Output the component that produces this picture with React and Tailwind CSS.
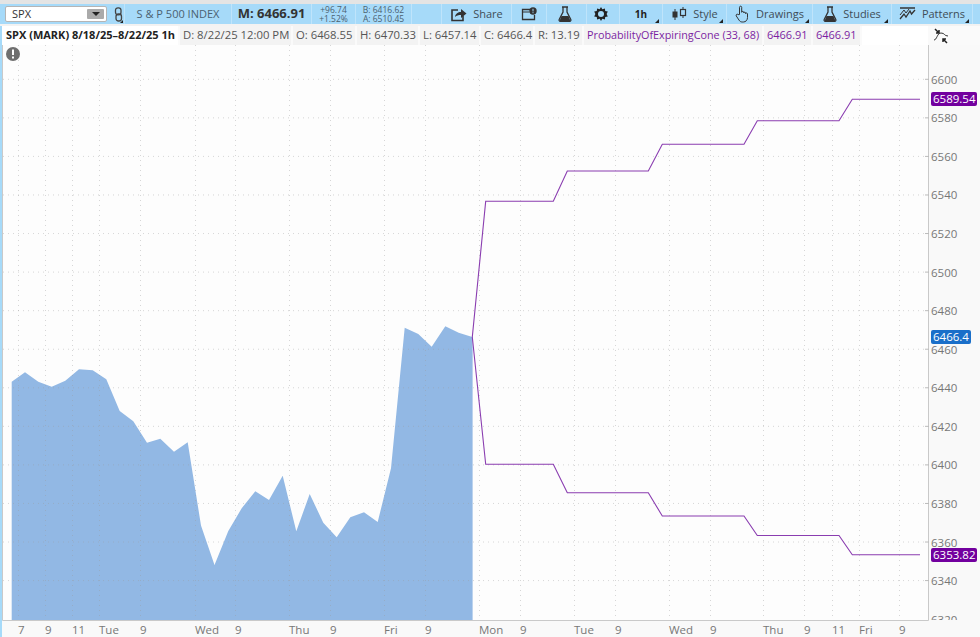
const font = { fontFamily: '"Open Sans", "Noto Sans", sans-serif' };

const levels = [6600, 6580, 6560, 6540, 6520, 6500, 6480, 6460, 6440, 6420, 6400, 6380, 6360, 6340, 6320];
const priceY = (v) => 79.3 + (6600 - v) * 1.928;

const timeTicks = [
  [18, '7'], [45, '9'], [72, '11'], [99, 'Tue'], [140, '9'], [195, 'Wed'], [235, '9'], [289, 'Thu'], [330, '9'],
  [384, 'Fri'], [425, '9'], [479, 'Mon'], [520, '9'], [574, 'Tue'], [615, '9'], [669, 'Wed'], [710, '9'],
  [763, 'Thu'], [804, '9'], [832, '11'], [859, 'Fri'], [899, '9'],
];

const area = [
  [11.7, 381.7], [25, 372.3], [38.3, 381.7], [51.7, 386.7], [65.3, 380.7], [79, 369.3], [92.7, 370.3], [106.3, 379.3],
  [119.7, 411], [133.3, 421.3], [147, 442.7], [160.3, 438.7], [174, 451.7], [187.7, 442.3], [201, 525.5], [214.5, 565],
  [228.3, 531], [241.7, 508.3], [255.3, 491.3], [269, 500], [282.7, 475.7], [296.3, 531.3], [309.7, 494], [323.3, 522.7],
  [336.7, 537.3], [350.3, 517.3], [364, 512.3], [377.7, 522], [391, 468.3], [404.7, 327.7], [418.3, 334], [431.7, 346.7],
  [445.3, 326.3], [458.7, 332.7], [472.3, 337],
];

const upper = [[472.3, 337], [485.7, 201.3], [553.3, 201.3], [567.3, 171], [648.3, 171], [662.3, 144.3], [744, 144.3], [757.3, 120.7], [839, 120.7], [852.3, 99.3], [920, 99.3]];
const lower = [[472.3, 337], [485.7, 464.3], [553.3, 464.3], [567.3, 492.7], [648.3, 492.7], [662.3, 516], [744, 516], [757.3, 535.5], [839, 535.5], [852.3, 554.7], [920, 554.7]];

const pts = (list) => list.map((p) => p.join(',')).join(' ');

function Corner() {
  return <span className="absolute right-[3px] bottom-[1px] w-0 h-0 border-l-[4px] border-l-transparent border-b-[4px] border-b-[#222]" />;
}

function ToolButton({ width, children, corner }) {
  return (
    <div className={`relative h-full flex items-center justify-center gap-[6px] border-r border-r-[#bfe4fb] text-[11px] text-[#3f4d57] ${width}`}>
      {children}
      {corner && <Corner />}
    </div>
  );
}

function ShareIcon() {
  return (
    <svg width="17" height="15" viewBox="0 0 17 15">
      <path d="M8 3H2v10.500h11V9" fill="none" stroke="#333" strokeWidth="1.600" />
      <path d="M5 10c.5-3.500 3-5 6-5V2l5.500 4.500L11 11V8C8.500 8 6.500 8.500 5 10z" fill="#333" />
    </svg>
  );
}

function AlertBoxIcon() {
  return (
    <svg width="16" height="14" viewBox="0 0 16 14">
      <path d="M9 2.500H1.500v10h12V8" fill="none" stroke="#333" strokeWidth="1.300" />
      <path d="M1.500 5h7" stroke="#333" strokeWidth="1" />
      <circle cx="12" cy="4" r="3.700" fill="#333" />
      <path d="M12 1.800v2.600M12 5.200v1" stroke="#a6daf9" strokeWidth="1" />
    </svg>
  );
}

function FlaskIcon() {
  return (
    <svg width="14" height="16" viewBox="0 0 14 16">
      <path d="M4 1h6M5 1v5L1.200 13.500c-.4 1 .2 1.800 1 1.800h9.600c.8 0 1.400-.8 1-1.800L9 6V1" fill="none" stroke="#333" strokeWidth="1.300" />
      <path d="M3.500 10h7l2 5H1.500z" fill="#333" />
    </svg>
  );
}

function GearIcon() {
  return (
    <svg width="14" height="14" viewBox="0 0 14 14">
      <path d="M7 0l1.300 2.300 2.600-.9.300 2.500 2.600.6-1.200 2.500 1.200 2.500-2.600.6-.3 2.500-2.600-.9L7 14l-1.300-2.300-2.600.9-.3-2.500-2.600-.6L1.400 7 .2 4.500l2.600-.6.300-2.500 2.600.9z" fill="#222" />
      <circle cx="7" cy="7" r="3" fill="#a6daf9" />
    </svg>
  );
}

function CandleIcon() {
  return (
    <svg width="16" height="15" viewBox="0 0 16 15">
      <path d="M4 2v11M12 0v11" stroke="#333" strokeWidth="1" />
      <rect x="1.500" y="4.500" width="5" height="6" fill="#333" />
      <rect x="9.500" y="2.500" width="5" height="6" fill="#a6daf9" stroke="#333" strokeWidth="1.200" />
    </svg>
  );
}

function HandIcon() {
  return (
    <svg width="15" height="18" viewBox="0 0 15 18">
      <path d="M4.500 9.500V2.300c0-1.500 2.200-1.500 2.200 0v5c0-1.200 2-1.200 2 0v.7c0-1.100 1.900-1.100 1.900 0v.7c0-1 1.900-1 1.900.2v3.600c0 2.600-1.700 4.500-4.200 4.500H7.200c-1.500 0-2.400-.7-3.200-1.900L1.300 11c-.8-1.300.8-2.500 1.800-1.400z" fill="none" stroke="#333" strokeWidth="1" />
    </svg>
  );
}

function PatternIcon() {
  return (
    <svg width="17" height="16" viewBox="0 0 17 16">
      <path d="M1 2h15" stroke="#333" strokeWidth="1.500" />
      <path d="M1 13l4-5 2 3 4-6 1.500 3L16 4" fill="none" stroke="#333" strokeWidth="1.300" />
      <path d="M1 9l4-5 2 3 3-4" fill="none" stroke="#333" strokeWidth="1" />
    </svg>
  );
}

function LinkIcon() {
  return (
    <svg width="9" height="15" viewBox="0 0 9 15">
      <rect x="1.500" y=".8" width="5.500" height="7" rx="2.500" fill="none" stroke="#444" strokeWidth="1.300" />
      <rect x="2" y="7" width="5.500" height="7" rx="2.500" fill="none" stroke="#444" strokeWidth="1.300" />
    </svg>
  );
}

function Toolbar() {
  return (
    <div className="h-[20px] flex items-stretch bg-[#a6daf9]">
      <div className="relative w-[125px] flex items-center pl-[5px] gap-[7px] border-r border-r-[#bfe4fb]">
        <div className="w-[102px] h-[16px] flex items-center justify-between bg-white border border-[#b5b5b5] rounded-[2px] pl-[6px] pr-[2px]">
          <span className="text-[11px] text-[#333]">SPX</span>
          <span className="w-[17px] h-[10px] bg-[#aaa] rounded-[1px] flex items-center justify-center">
            <span className="w-0 h-0 border-x-[4px] border-x-transparent border-t-[4px] border-t-[#222]" />
          </span>
        </div>
        <LinkIcon />
        <span className="absolute right-[1px] bottom-[1px] w-0 h-0 border-l-[3px] border-l-transparent border-b-[3px] border-b-[#222]" />
      </div>
      <div className="w-[107px] flex items-center justify-center border-r border-r-[#bfe4fb] text-[11px] text-[#4b6170]">S &amp; P 500 INDEX</div>
      <div className="w-[80px] flex items-center justify-center border-r border-r-[#bfe4fb] text-[13px] font-bold text-[#333]">M: 6466.91</div>
      <div className="w-[44px] flex flex-col justify-center items-center border-r border-r-[#bfe4fb] text-[8.5px] leading-[9px] text-[#4b6170]">
        <span>+96.74</span>
        <span>+1.52%</span>
      </div>
      <div className="w-[56px] flex flex-col justify-center items-center border-r border-r-[#bfe4fb] text-[8.5px] leading-[9px] text-[#4b6170]">
        <span>B: 6416.62</span>
        <span>A: 6510.45</span>
      </div>
      <div className="w-[30px] border-r border-r-[#bfe4fb]" />
      <ToolButton width="w-[70px]"><ShareIcon />Share</ToolButton>
      <ToolButton width="w-[35px]"><AlertBoxIcon /></ToolButton>
      <ToolButton width="w-[40px] pr-[4px]"><FlaskIcon /></ToolButton>
      <ToolButton width="w-[33px] pr-[5px]"><GearIcon /></ToolButton>
      <ToolButton width="w-[43px]" corner><span className="text-[10px] font-bold text-[#222]">1h</span></ToolButton>
      <ToolButton width="w-[64px]" corner><CandleIcon />Style</ToolButton>
      <ToolButton width="w-[86px]" corner><HandIcon />Drawings</ToolButton>
      <ToolButton width="w-[79px]" corner><FlaskIcon />Studies</ToolButton>
      <ToolButton width="w-[81px]" corner><PatternIcon />Patterns</ToolButton>
    </div>
  );
}

const cells = [
  ['w-[176px] pl-[4px] bg-white font-bold text-[11px] text-[#222]', 'SPX (MARK) 8/18/25–8/22/25 1h'],
  ['w-[111px] bg-[#f3f3f3] text-[11.3px] text-[#555]', 'D: 8/22/25 12:00 PM'],
  ['w-[62px] bg-[#f3f3f3] text-[11.3px] text-[#555]', 'O: 6468.55'],
  ['w-[61px] bg-[#f3f3f3] text-[11.3px] text-[#555]', 'H: 6470.33'],
  ['w-[59px] bg-[#f3f3f3] text-[11.3px] text-[#555]', 'L: 6457.14'],
  ['w-[52px] bg-[#f3f3f3] text-[11.3px] text-[#555]', 'C: 6466.4'],
  ['w-[47px] bg-[#f3f3f3] text-[11.3px] text-[#555]', 'R: 13.19'],
  ['w-[178px] bg-[#f3f3f3] text-[10.8px] text-[#7b1fa2]', 'ProbabilityOfExpiringCone (33, 68)'],
  ['w-[47px] bg-[#f3f3f3] text-[11px] text-[#7b1fa2]', '6466.91'],
  ['w-[47px] bg-[#f3f3f3] text-[11px] text-[#7b1fa2]', '6466.91'],
  ['w-[66px] bg-white', ''],
];

function StatusRow() {
  return (
    <div className="h-[19px] flex bg-[#fafafa]">
      <div className="flex gap-[2px] w-[926px]">
        {cells.map(([cls, text], i) => (
          <div key={i} className={`h-full flex items-center pl-[3px] whitespace-nowrap ${cls}`}>{text}</div>
        ))}
      </div>
      <div className="flex-1 flex items-center pl-[5px]">
        <svg width="16" height="16" viewBox="0 0 16 16">
          <path d="M1 12c3 0 3-7 7-7s3 3 7 3" fill="none" stroke="#333" strokeWidth="1" />
          <path d="M2 1l4 4M6 2v3H3M14 15l-4-4M10 14v-3h3" fill="none" stroke="#222" strokeWidth="1.500" />
        </svg>
      </div>
    </div>
  );
}

function Badge({ y, width, fill, text }) {
  return (
    <g>
      <rect x="931" y={y} width={width} height="14" rx="2" fill={fill} />
      <text x="933" y={y + 11} fontSize="11.500" fill="#fff">{text}</text>
    </g>
  );
}

function Chart() {
  return (
    <svg className="block" width="978" height="592" viewBox="2 45 978 592" style={font}>
      <defs>
        <clipPath id="axis-clip"><rect x="929" y="45" width="51" height="575" /></clipPath>
      </defs>
      <rect x="2" y="45" width="978" height="592" fill="#f9f9f9" />
      <rect x="3" y="45" width="925" height="575" fill="#fdfdfd" />
      <polygon points={`${pts(area)} 472.3,620 11.7,620`} fill="#92b8e4" />
      <path d="M472.500 337V620" stroke="#bcd3ee" strokeWidth="1" />
      {levels.slice(0, 14).map((v) => (
        <line key={v} x1="3" x2="928" y1={priceY(v)} y2={priceY(v)} stroke="#9a9a9a" strokeOpacity="0.4" strokeWidth="1" strokeDasharray="1 4" />
      ))}
      {timeTicks.map(([x]) => (
        <line key={x} x1={x + 0.5} x2={x + 0.5} y1="45" y2="620" stroke="#9a9a9a" strokeOpacity="0.4" strokeWidth="1" strokeDasharray="1 4" />
      ))}
      <polyline points={pts(upper)} fill="none" stroke="#8a3db0" strokeWidth="1.100" />
      <polyline points={pts(lower)} fill="none" stroke="#8a3db0" strokeWidth="1.100" />
      <path d="M2.500 45V620.500H928.500V45" fill="none" stroke="#c9c9c9" strokeWidth="1" />
      <g clipPath="url(#axis-clip)">
        {levels.map((v) => (
          <text key={v} x="931" y={priceY(v) + 4.500} fontSize="11.500" fill="#777">{v}</text>
        ))}
      </g>
      {levels.slice(0, 14).map((v) => (
        <line key={v} x1="925" x2="929" y1={priceY(v)} y2={priceY(v)} stroke="#bbb" strokeWidth="1" />
      ))}
      {timeTicks.map(([x, label]) => (
        <text key={x} x={x} y="634" fontSize="11.500" fill="#777">{label}</text>
      ))}
      <Badge y={92} width={46} fill="#72009e" text="6589.54" />
      <Badge y={330} width={40} fill="#1a6fc9" text="6466.4" />
      <Badge y={548} width={46} fill="#72009e" text="6353.82" />
      <circle cx="13" cy="54" r="7" fill="#6f6f6f" />
      <path d="M13 49.500v5.500M13 56.500v2" stroke="#fff" strokeWidth="2" />
    </svg>
  );
}

export default function App() {
  return (
    <div className="w-[980px] h-[637px] overflow-hidden flex flex-col bg-[#a6daf9]" style={font}>
      <div className="h-[4px] bg-[#e4e4e4]" />
      <Toolbar />
      <div className="h-[2px] bg-[#f2f2f2]" />
      <div className="ml-[2px] flex flex-col">
        <StatusRow />
        <Chart />
      </div>
    </div>
  );
}
